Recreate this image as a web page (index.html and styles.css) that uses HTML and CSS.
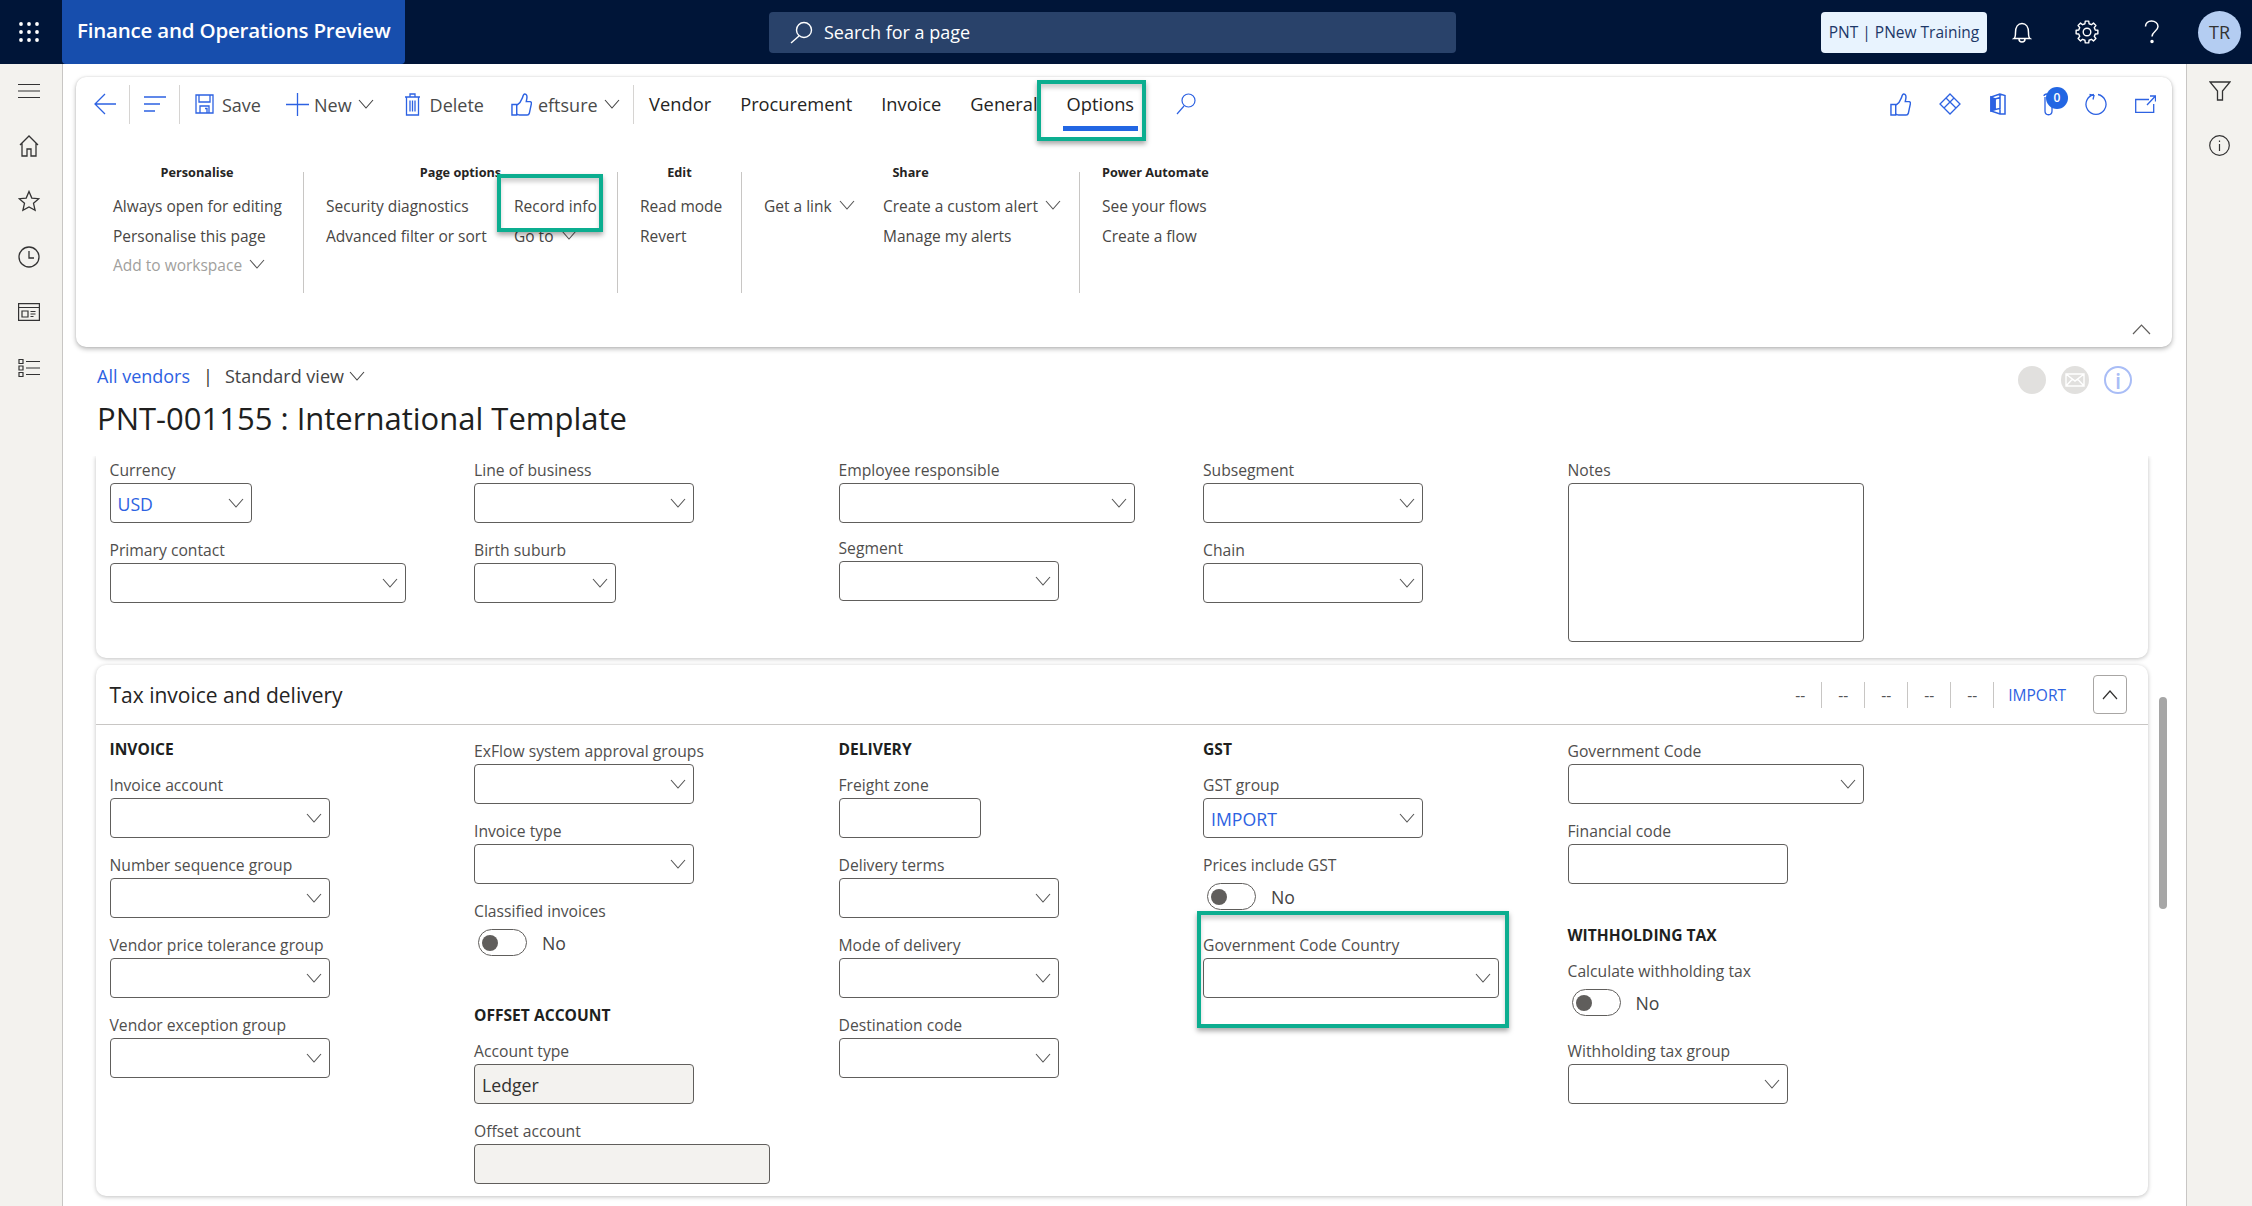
FILE: index.html
```html
<!DOCTYPE html>
<html lang="en">
<head>
<meta charset="utf-8">
<title>Finance and Operations Preview</title>
<link rel="stylesheet" href="styles.css">
</head>
<body>
<svg class="defs" width="0" height="0" aria-hidden="true">
  <symbol id="chev" viewBox="0 0 16 10"><path d="M1 1l7 8 7-8" fill="none" stroke="currentColor" stroke-width="1.1"/></symbol>
  <symbol id="thumb" viewBox="0 0 22 24"><path d="M1 12h5v11H1zM6 13c3-2 5-5 6-8 .4-1.500 1-4 2.400-4 2 0 2.600 2 2.200 4.500L16 9h4c1.400 0 1.600 1.500 1.200 2.800l-2 9.400c-.3 1.200-1.200 1.800-2.300 1.800H9c-1.300 0-2-.6-3-1" fill="none" stroke="currentColor" stroke-width="1.500"/></symbol>
</svg>
<div class="page">
  <header class="topbar">
    <div class="waffle">
      <svg width="22" height="22" viewBox="0 0 22 22" fill="#fff"><circle cx="3" cy="3" r="1.900"/><circle cx="11" cy="3" r="1.900"/><circle cx="19" cy="3" r="1.900"/><circle cx="3" cy="11" r="1.900"/><circle cx="11" cy="11" r="1.900"/><circle cx="19" cy="11" r="1.900"/><circle cx="3" cy="19" r="1.900"/><circle cx="11" cy="19" r="1.900"/><circle cx="19" cy="19" r="1.900"/></svg>
    </div>
    <div class="app-tile">Finance and Operations Preview</div>
    <div class="search-bar">
      <svg width="23" height="23" viewBox="0 0 23 23" fill="none" stroke="#fff" stroke-width="1.400"><circle cx="14" cy="9" r="7.500"/><path d="M9 15L1 22"/></svg>
      <span>Search for a page</span>
    </div>
    <div class="entity">PNT | PNew Training</div>
    <div class="top-icon first">
      <svg width="20" height="21" viewBox="0 0 20 21" fill="none" stroke="#fff" stroke-width="1.500"><path d="M2 16.500c1.500-1 1.500-3 1.500-6C3.500 5 6 1.500 10 1.500s6.500 3.500 6.500 9c0 3 0 5 1.500 6zM7 17c0 2 1.300 3 3 3s3-1 3-3"/></svg>
    </div>
    <div class="top-icon">
      <svg width="24" height="24" viewBox="0 0 24 24" fill="none" stroke="#fff" stroke-width="1.400" stroke-linejoin="round"><circle cx="12" cy="12" r="3.800"/><path d="M9.940 3.750L10.280 1.130H13.720L14.060 3.750L16.380 4.710L18.470 3.100L20.900 5.530L19.290 7.620L20.250 9.940L22.870 10.280V13.720L20.250 14.060L19.290 16.380L20.900 18.470L18.470 20.900L16.380 19.290L14.060 20.250L13.720 22.870H10.280L9.940 20.250L7.620 19.290L5.530 20.900L3.100 18.470L4.710 16.380L3.750 14.060L1.130 13.720V10.280L3.750 9.940L4.710 7.620L3.100 5.530L5.530 3.100L7.620 4.710Z"/></svg>
    </div>
    <div class="top-icon">
      <svg width="16" height="24" viewBox="0 0 16 24" fill="none" stroke="#fff" stroke-width="1.500"><path d="M1.500 6.500C1.500 3.200 4 1 7.500 1s6.500 2.200 6.500 5.500c0 4.500-6 5-6 10"/><circle cx="8" cy="21.500" r="1" fill="#fff"/></svg>
    </div>
    <div class="avatar">TR</div>
  </header>

  <div class="shell">
    <nav class="rail rail-left">
      <div class="rail-cell"><svg width="22" height="16" viewBox="0 0 22 16" stroke="#333" stroke-width="1.200"><path d="M0 1.500h22M0 8h22M0 14.500h22"/></svg></div>
      <div class="rail-cell"><svg width="20" height="22" viewBox="0 0 20 22" fill="none" stroke="#333" stroke-width="1.300"><path d="M1 10L10 1l9 9M3 8v13h5v-7h4v7h5V8"/></svg></div>
      <div class="rail-cell"><svg width="22" height="22" viewBox="0 0 22 22" fill="none" stroke="#333" stroke-width="1.300"><path d="M11 1.500l2.800 6.600 7 .6-5.300 4.600 1.600 7L11 17l-6.100 3.300 1.600-7L1.200 8.700l7-.6z"/></svg></div>
      <div class="rail-cell"><svg width="22" height="22" viewBox="0 0 22 22" fill="none" stroke="#333" stroke-width="1.300"><circle cx="11" cy="11" r="10"/><path d="M11 5v7h5"/></svg></div>
      <div class="rail-cell"><svg width="22" height="18" viewBox="0 0 22 18" fill="none" stroke="#333" stroke-width="1.200"><path d="M.6.600h20.800v16.800H.6zM.6 4.500h20.800M4 8h6v6H4zM12.500 8.500h5M12.500 11h5M12.500 13.500h3"/></svg></div>
      <div class="rail-cell"><svg width="22" height="20" viewBox="0 0 22 20" fill="none" stroke="#333" stroke-width="1.200"><path d="M1 1.500h4v4H1zM1 8h4v4H1zM1 14.500h4v4H1zM8 3.500h14M8 10h14M8 16.500h14"/></svg></div>
    </nav>

    <main class="main">
      <section class="pane">
        <div class="cmd-row">
          <svg class="ic back" width="22" height="22" viewBox="0 0 22 22" fill="none" stroke="currentColor" stroke-width="1.300"><path d="M22 11H1M11 1L1 11l10 10"/></svg>
          <i class="vsep s1"></i>
          <svg class="ic lines" width="22" height="18" viewBox="0 0 22 18" stroke="currentColor" stroke-width="1.500"><path d="M0 2h22M0 9h16M0 16h11"/></svg>
          <i class="vsep s2"></i>
          <div class="cmd save">
            <svg class="ic" width="19" height="20" viewBox="0 0 19 20" fill="none" stroke="currentColor" stroke-width="1.300"><path d="M1 1h17v18H1zM4 1v7h11V1M5 19v-7h9v7M10 14.500h2V19"/></svg>
            <span>Save</span>
          </div>
          <div class="cmd new">
            <svg class="ic" width="23" height="23" viewBox="0 0 23 23" stroke="currentColor" stroke-width="1.300"><path d="M11.500 0v23M0 11.500h23"/></svg>
            <span>New</span>
            <svg class="chev-cmd" width="16" height="10"><use href="#chev"/></svg>
          </div>
          <div class="cmd del">
            <svg class="ic" width="17" height="23" viewBox="0 0 17 23" fill="none" stroke="currentColor" stroke-width="1.300"><path d="M1 4h15M6 4V1h5v3M2.500 4v18h12V4M6 7.500v11M8.500 7.500v11M11 7.500v11"/></svg>
            <span>Delete</span>
          </div>
          <div class="cmd eft">
            <svg class="ic" width="21" height="23"><use href="#thumb"/></svg>
            <span>eftsure</span>
            <svg class="chev-cmd" width="16" height="10"><use href="#chev"/></svg>
          </div>
          <i class="vsep s3"></i>
          <div class="tabs">
            <span class="tab">Vendor</span>
            <span class="tab">Procurement</span>
            <span class="tab">Invoice</span>
            <span class="tab">General</span>
            <span class="tab active">Options</span>
          </div>
          <svg class="ic find" width="20" height="22" viewBox="0 0 20 22" fill="none" stroke="currentColor" stroke-width="1.200"><circle cx="12.500" cy="7.500" r="6.500"/><path d="M8 13L1 21"/></svg>
          <div class="tools">
            <svg class="ic" width="21" height="23"><use href="#thumb"/></svg>
            <svg class="ic" width="22" height="22" viewBox="0 0 22 22" fill="none" stroke="currentColor" stroke-width="1.300"><path d="M11 1l10 10-10 10L1 11zM7 5l10 10M15 5L5 15" /></svg>
            <svg class="ic" width="18" height="22" viewBox="0 0 18 22" fill="none" stroke="currentColor" stroke-width="1.500"><path d="M11 1L2 4v14l9 3h5V2.500zM11 1v20M6 16.500l5-1V4.500L6 6z" /><path d="M2 4v14l4-1.500V6z" fill="currentColor"/></svg>
            <div class="clip">
              <svg class="ic" width="10" height="23" viewBox="0 0 10 23" fill="none" stroke="currentColor" stroke-width="1.300"><path d="M2 4v14c0 5 7 5 7 0V5"/><path d="M1 3c0-1 1-2 3-2"/></svg>
              <b class="badge">0</b>
            </div>
            <svg class="ic" width="22" height="22" viewBox="0 0 22 22" fill="none" stroke="currentColor" stroke-width="1.300"><path d="M9 1.500a10 10 0 1 0 4 0M4.500 1.500L9 2.500 8 6.500"/></svg>
            <svg class="ic" width="21" height="18" viewBox="0 0 21 18" fill="none" stroke="currentColor" stroke-width="1.300"><path d="M14 4.500H.7v13h18V9M12 10l8-8.500M15 1h5.500v5.500"/></svg>
          </div>
        </div>

        <div class="ribbon">
          <div class="group g-personal">
            <div class="g-head">Personalise</div>
            <div class="g-cols">
              <div class="g-col">
                <span>Always open for editing</span>
                <span>Personalise this page</span>
                <span class="muted">Add to workspace <svg width="16" height="10"><use href="#chev"/></svg></span>
              </div>
            </div>
          </div>
          <div class="group g-page">
            <div class="g-head">Page options</div>
            <div class="g-cols">
              <div class="g-col">
                <span>Security diagnostics</span>
                <span>Advanced filter or sort</span>
              </div>
              <div class="g-col">
                <span>Record info</span>
                <span>Go to <svg width="16" height="10"><use href="#chev"/></svg></span>
              </div>
            </div>
          </div>
          <div class="group g-edit">
            <div class="g-head">Edit</div>
            <div class="g-cols">
              <div class="g-col">
                <span>Read mode</span>
                <span>Revert</span>
              </div>
            </div>
          </div>
          <div class="group g-share">
            <div class="g-head">Share</div>
            <div class="g-cols">
              <div class="g-col">
                <span>Get a link <svg width="16" height="10"><use href="#chev"/></svg></span>
              </div>
              <div class="g-col">
                <span>Create a custom alert <svg width="16" height="10"><use href="#chev"/></svg></span>
                <span>Manage my alerts</span>
              </div>
            </div>
          </div>
          <div class="group g-flow">
            <div class="g-head left">Power Automate</div>
            <div class="g-cols">
              <div class="g-col">
                <span>See your flows</span>
                <span>Create a flow</span>
              </div>
            </div>
          </div>
        </div>
        <div class="pane-foot">
          <svg width="19" height="11" viewBox="0 0 19 11"><path d="M1 10l8.500-9L18 10" fill="none" stroke="#605e5c" stroke-width="1.200"/></svg>
        </div>
      </section>

      <section class="page-head">
        <div class="crumb-row">
          <a class="crumb">All vendors</a>
          <span class="crumb-sep">|</span>
          <span class="view">Standard view</span>
          <svg class="view-chev" width="16" height="10"><use href="#chev"/></svg>
          <div class="status">
            <span class="dot"></span>
            <span class="dot">
              <svg width="20" height="14" viewBox="0 0 20 14" fill="none" stroke="#fff" stroke-width="1.400"><path d="M1 1h18v12H1zM1 1l9 7 9-7M1 13l6.500-7M19 13l-6.500-7"/></svg>
            </span>
            <span class="info-round">i</span>
          </div>
        </div>
        <h1 class="title">PNT-001155 : International Template</h1>
      </section>

      <div class="form-region">
        <div class="cards">
          <section class="card card-a">
            <div class="grid grid-a">
              <div class="col">
                <div class="field"><label>Currency</label><div class="input w-s link">USD<svg class="chev" width="16" height="10"><use href="#chev"/></svg></div></div>
                <div class="field"><label>Primary contact</label><div class="input w-l"><svg class="chev" width="16" height="10"><use href="#chev"/></svg></div></div>
              </div>
              <div class="col">
                <div class="field"><label>Line of business</label><div class="input w-m"><svg class="chev" width="16" height="10"><use href="#chev"/></svg></div></div>
                <div class="field"><label>Birth suburb</label><div class="input w-s"><svg class="chev" width="16" height="10"><use href="#chev"/></svg></div></div>
              </div>
              <div class="col">
                <div class="field tight"><label>Employee responsible</label><div class="input w-l"><svg class="chev" width="16" height="10"><use href="#chev"/></svg></div></div>
                <div class="field"><label>Segment</label><div class="input w-m"><svg class="chev" width="16" height="10"><use href="#chev"/></svg></div></div>
              </div>
              <div class="col">
                <div class="field"><label>Subsegment</label><div class="input w-m"><svg class="chev" width="16" height="10"><use href="#chev"/></svg></div></div>
                <div class="field"><label>Chain</label><div class="input w-m"><svg class="chev" width="16" height="10"><use href="#chev"/></svg></div></div>
              </div>
              <div class="col">
                <div class="field last"><label>Notes</label><div class="input w-l notes"></div></div>
              </div>
            </div>
          </section>

          <section class="card card-b">
            <div class="card-head">
              <h2>Tax invoice and delivery</h2>
              <div class="summary">
                <span>--</span><span>--</span><span>--</span><span>--</span><span>--</span><span class="link">IMPORT</span>
              </div>
              <div class="collapse"><svg width="16" height="10" viewBox="0 0 16 10"><path d="M1 9l7-8 7 8" fill="none" stroke="#323130" stroke-width="1.200"/></svg></div>
            </div>
            <div class="grid grid-b">
              <div class="col">
                <h3 class="sec first">INVOICE</h3>
                <div class="field"><label>Invoice account</label><div class="input w-m"><svg class="chev" width="16" height="10"><use href="#chev"/></svg></div></div>
                <div class="field"><label>Number sequence group</label><div class="input w-m"><svg class="chev" width="16" height="10"><use href="#chev"/></svg></div></div>
                <div class="field"><label>Vendor price tolerance group</label><div class="input w-m"><svg class="chev" width="16" height="10"><use href="#chev"/></svg></div></div>
                <div class="field"><label>Vendor exception group</label><div class="input w-m"><svg class="chev" width="16" height="10"><use href="#chev"/></svg></div></div>
              </div>
              <div class="col">
                <div class="field"><label>ExFlow system approval groups</label><div class="input w-m"><svg class="chev" width="16" height="10"><use href="#chev"/></svg></div></div>
                <div class="field"><label>Invoice type</label><div class="input w-m"><svg class="chev" width="16" height="10"><use href="#chev"/></svg></div></div>
                <div class="field sw-a"><label>Classified invoices</label><div class="switch"><i class="track"></i><span>No</span></div></div>
                <h3 class="sec">OFFSET ACCOUNT</h3>
                <div class="field"><label>Account type</label><div class="input w-m off">Ledger</div></div>
                <div class="field last"><label>Offset account</label><div class="input w-l off"></div></div>
              </div>
              <div class="col">
                <h3 class="sec first">DELIVERY</h3>
                <div class="field"><label>Freight zone</label><div class="input w-s"></div></div>
                <div class="field"><label>Delivery terms</label><div class="input w-m"><svg class="chev" width="16" height="10"><use href="#chev"/></svg></div></div>
                <div class="field"><label>Mode of delivery</label><div class="input w-m"><svg class="chev" width="16" height="10"><use href="#chev"/></svg></div></div>
                <div class="field"><label>Destination code</label><div class="input w-m"><svg class="chev" width="16" height="10"><use href="#chev"/></svg></div></div>
              </div>
              <div class="col">
                <h3 class="sec first">GST</h3>
                <div class="field"><label>GST group</label><div class="input w-m link">IMPORT<svg class="chev" width="16" height="10"><use href="#chev"/></svg></div></div>
                <div class="field sw-b"><label>Prices include GST</label><div class="switch"><i class="track"></i><span>No</span></div></div>
                <div class="field"><label>Government Code Country</label><div class="input w-l"><svg class="chev" width="16" height="10"><use href="#chev"/></svg></div></div>
              </div>
              <div class="col">
                <div class="field"><label>Government Code</label><div class="input w-l"><svg class="chev" width="16" height="10"><use href="#chev"/></svg></div></div>
                <div class="field fin"><label>Financial code</label><div class="input w-m"></div></div>
                <h3 class="sec">WITHHOLDING TAX</h3>
                <div class="field sw-b"><label>Calculate withholding tax</label><div class="switch"><i class="track"></i><span>No</span></div></div>
                <div class="field"><label>Withholding tax group</label><div class="input w-m"><svg class="chev" width="16" height="10"><use href="#chev"/></svg></div></div>
              </div>
            </div>
          </section>
        </div>
        <div class="scroll"><div class="thumb"></div></div>
      </div>
    </main>

    <aside class="rail rail-right">
      <div class="rail-cell"><svg width="22" height="20" viewBox="0 0 22 20" fill="none" stroke="#333" stroke-width="1.300"><path d="M1 1h20l-7.500 9v9h-5v-9z"/></svg></div>
      <div class="rail-cell"><svg width="21" height="21" viewBox="0 0 21 21" fill="none" stroke="#333" stroke-width="1.200"><circle cx="10.500" cy="10.500" r="9.800"/><path d="M10.500 9v7M10.500 5.500v1.500"/></svg></div>
    </aside>
  </div>

  <div class="mark mark-options"></div>
  <div class="mark mark-record"></div>
  <div class="mark mark-gov"></div>
</div>
</body>
</html>
```

FILE: styles.css
```css
* { box-sizing: border-box; }
html, body { margin: 0; padding: 0; height: 100%; overflow: hidden; }
body { font-family: "Open Sans", "Noto Sans", sans-serif; color: #323130; background: #fff; }
.defs { position: absolute; }
.page { position: relative; width: 2252px; height: 1206px; overflow: hidden; }

/* top bar */
.topbar { height: 64px; background: #001538; display: flex; align-items: center; color: #fff; }
.waffle { width: 62px; display: flex; justify-content: center; padding-right: 5px; }
.app-tile { width: 343px; height: 64px; background: #174ead; border-radius: 0 0 4px 4px; display: flex; align-items: center; padding: 0 0 5px 15px; font-size: 20.500px; font-weight: 600; white-space: nowrap; letter-spacing: -.2px; }
.search-bar { margin-left: 364px; width: 687px; height: 41px; background: #29426a; border-radius: 4px; display: flex; align-items: center; gap: 11px; padding-left: 21px; font-size: 18px; }
.entity { margin-left: 365px; width: 166px; height: 41px; background: #e8f3fe; border-radius: 4px; color: #1d3868; font-size: 15.500px; font-weight: 500; display: flex; align-items: center; justify-content: center; white-space: nowrap; }
.top-icon { width: 65px; display: flex; justify-content: center; }
.top-icon.first { margin-left: 2px; }
.avatar { width: 43px; height: 43px; margin-left: 14px; border-radius: 50%; background: #b4cdf2; color: #333; font-size: 18px; display: flex; align-items: center; justify-content: center; }

/* shell */
.shell { display: flex; height: 1142px; }
.rail { background: #f3f2ee; flex: none; }
.rail-left { width: 63px; border-right: 1px solid #c8c6c4; padding-top: 0; }
.rail-right { width: 66px; border-left: 1px solid #c8c6c4; }
.rail-cell { height: 55.400px; display: flex; align-items: center; justify-content: center; }
.rail-left .rail-cell { padding-right: 5px; position: relative; top: -1px; }
.rail-right .rail-cell { height: 54px; }
.main { flex: 1; min-width: 0; background: #fff; padding: 13px 14px 0 13px; }

/* action pane */
.pane { height: 270px; background: #fff; border-radius: 10px; box-shadow: 0 2px 5px rgba(0,0,0,.28), 0 0 2px rgba(0,0,0,.12); padding-top: 7px; }
.cmd-row { height: 40px; display: flex; align-items: center; padding-left: 18px; font-size: 18px; }
.ic { color: #2d62e2; flex: none; }
.vsep { width: 1px; height: 39px; background: #d6d4d2; flex: none; }
.s1 { margin-left: 13px; }
.lines { margin-left: 14px; }
.s2 { margin-left: 13px; }
.cmd { display: flex; align-items: center; color: #4a4a4a; white-space: nowrap; }
.cmd span { padding-top: 2px; }
.save { margin-left: 15px; gap: 8px; }
.new { margin-left: 25px; gap: 5px; }
.new .chev-cmd { margin-left: 1px; }
.del { margin-left: 30px; gap: 9px; }
.eft { margin-left: 27px; gap: 6px; }
.chev-cmd { color: #444; }
.s3 { margin-left: 13px; }
.tabs { display: flex; margin-left: 1px; }
.tab { position: relative; padding: 0 14.500px; font-size: 18.300px; font-weight: 500; color: #252423; white-space: nowrap; line-height: 42px; }
.tab.active::after { content: ""; position: absolute; left: 11px; right: 11px; bottom: -6px; height: 5px; background: #2266e3; }
.find { margin-left: 27px; }
.tools { margin-left: auto; display: flex; align-items: center; padding-right: 16px; gap: 28px; }
.clip { position: relative; width: 22px; height: 23px; display: flex; margin-left: 8px; margin-right: -8px; }
.badge { position: absolute; left: 3px; top: -6px; width: 22px; height: 22px; border-radius: 50%; background: #2266e3; color: #fff; font-size: 12px; font-weight: 600; display: flex; align-items: center; justify-content: center; }

/* ribbon */
.ribbon { display: flex; margin-top: 48px; height: 121px; font-size: 15.500px; color: #484644; }
.group { border-left: 1px solid #c8c6c4; }
.group:first-child { border-left: 0; }
.g-head { font-size: 12.700px; font-weight: 700; color: #252423; text-align: center; line-height: 0; height: 0; margin-right: 22px; }
.g-head.left { text-align: left; margin-right: 0; }
.g-cols { display: flex; padding-top: 24px; }
.g-col { display: flex; flex-direction: column; gap: 8px; white-space: nowrap; }
.g-col > span { line-height: 21.500px; height: 21.500px; }
.g-col svg { margin-left: 3px; color: #555; vertical-align: 2px; }
.muted { color: #a19f9d; }
.g-personal { width: 227px; padding-left: 37px; }
.g-page { width: 314px; padding-left: 22px; }
.g-page .g-cols { gap: 0; }
.g-page .g-col:first-child { width: 188px; }
.g-edit { width: 124px; padding-left: 22px; }
.g-share { width: 338px; padding-left: 22px; }
.g-share .g-col:first-child { width: 119px; }
.g-flow { padding-left: 22px; }
.pane-foot { display: flex; justify-content: flex-end; padding: 31px 21px 0 0; }

/* page head */
.page-head { height: 109px; padding: 17px 0 0 21px; }
.crumb-row { display: flex; align-items: center; height: 24px; font-size: 18px; }
.crumb { color: #2d62e2; }
.crumb-sep { margin-left: 13px; color: #323130; }
.view { margin-left: 12px; color: #444; }
.view-chev { margin-left: 5px; color: #444; }
.status { margin-left: auto; margin-top: 8px; display: flex; gap: 15px; padding-right: 40px; }
.dot { width: 28px; height: 28px; border-radius: 50%; background: #e1e0de; display: flex; align-items: center; justify-content: center; }
.info-round { width: 28px; height: 28px; border-radius: 50%; border: 2px solid #a9bdf6; color: #a9bdf6; font-size: 22px; font-weight: 600; display: flex; align-items: center; justify-content: center; }
.title { margin: 7px 0 0; font-size: 31px; font-weight: 500; line-height: 46px; color: #201f1e; white-space: nowrap; }

/* form */
.form-region { display: flex; margin-left: 20px; }
.cards { width: 2052px; flex: none; display: flex; flex-direction: column; gap: 7px; }
.card { background: #fff; border-radius: 0 0 10px 10px; box-shadow: 0 1px 4px rgba(0,0,0,.25); }
.card-a { clip-path: inset(0 -8px -8px -8px); }
.card-b { border-radius: 10px; }
.grid { display: grid; grid-template-columns: repeat(5, 364.500px); padding-left: 13.500px; }
.grid-a { padding-top: 5px; padding-bottom: 16px; }
.grid-b { padding-top: 17px; padding-bottom: 12px; }
.col { display: flex; flex-direction: column; align-items: flex-start; }
.field { margin-bottom: 18px; }
.field.last { margin-bottom: 0; }
.field.tight { margin-bottom: 16px; }
.field.sw-a { margin-bottom: 49px; }
.field.sw-b { margin-bottom: 26px; }
.field.fin { margin-bottom: 41px; }
.field label { display: block; height: 20px; line-height: 18px; margin-bottom: 2px; font-size: 15.700px; color: #4f4e4d; white-space: nowrap; }
.input { height: 40px; border: 1px solid #605e5c; border-radius: 4px; background: #fff; display: flex; align-items: center; padding: 2px 7px 0; font-size: 17.700px; color: #323130; }
.input.link, .link { color: #2d62e2; }
.w-s { width: 142px; }
.w-m { width: 220px; }
.w-l { width: 296px; }
.notes { height: 159px; }
.off { background: #f3f2ef; }
.chev { margin-left: auto; color: #555; flex: none; margin-top: -2px; }
.sec { margin: 0 0 17px; height: 20px; line-height: 20px; font-size: 15.600px; font-weight: 700; color: #201f1e; white-space: nowrap; }
.sec.first { margin-top: -3px; }
.switch { display: flex; align-items: center; height: 27px; margin-top: 7px; padding-left: 4px; font-size: 17.700px; color: #444; }
.track { position: relative; width: 49px; height: 27px; border: 1px solid #605e5c; border-radius: 14px; background: #fff; flex: none; }
.track::before { content: ""; position: absolute; left: 3px; top: 4.500px; width: 16px; height: 16px; border-radius: 50%; background: #605e5c; }
.switch span { margin-left: 15px; }

.card-head { height: 60px; border-bottom: 1px solid #c8c6c4; display: flex; align-items: center; padding: 0 21px 0 13.500px; }
.card-head h2 { margin: 0; font-size: 21px; font-weight: 500; color: #252423; white-space: nowrap; }
.summary { margin-left: auto; display: flex; align-items: center; font-size: 15.500px; color: #555; }
.summary span { width: 43px; height: 26px; line-height: 26px; text-align: center; border-right: 1px solid #c8c6c4; }
.summary span.link { width: auto; border: 0; padding-left: 14px; color: #2d62e2; }
.collapse { margin-left: 27px; width: 34px; height: 39px; border: 1px solid #a8a6a4; border-radius: 4px; display: flex; align-items: center; justify-content: center; }
.scroll { padding: 241px 0 0 11px; }
.thumb { width: 8px; height: 212px; border-radius: 4px; background: #a6a6a6; }

/* annotation boxes */
.mark { position: absolute; border: 4px solid #0cae90; box-shadow: 0 3px 5px rgba(0,0,0,.35), inset 0 4px 4px rgba(0,0,0,.18); pointer-events: none; }
.mark-options { left: 1037px; top: 80px; width: 109px; height: 61px; }
.mark-record { left: 497px; top: 174px; width: 106px; height: 58px; }
.mark-gov { left: 1197px; top: 911px; width: 312px; height: 117px; }
```
